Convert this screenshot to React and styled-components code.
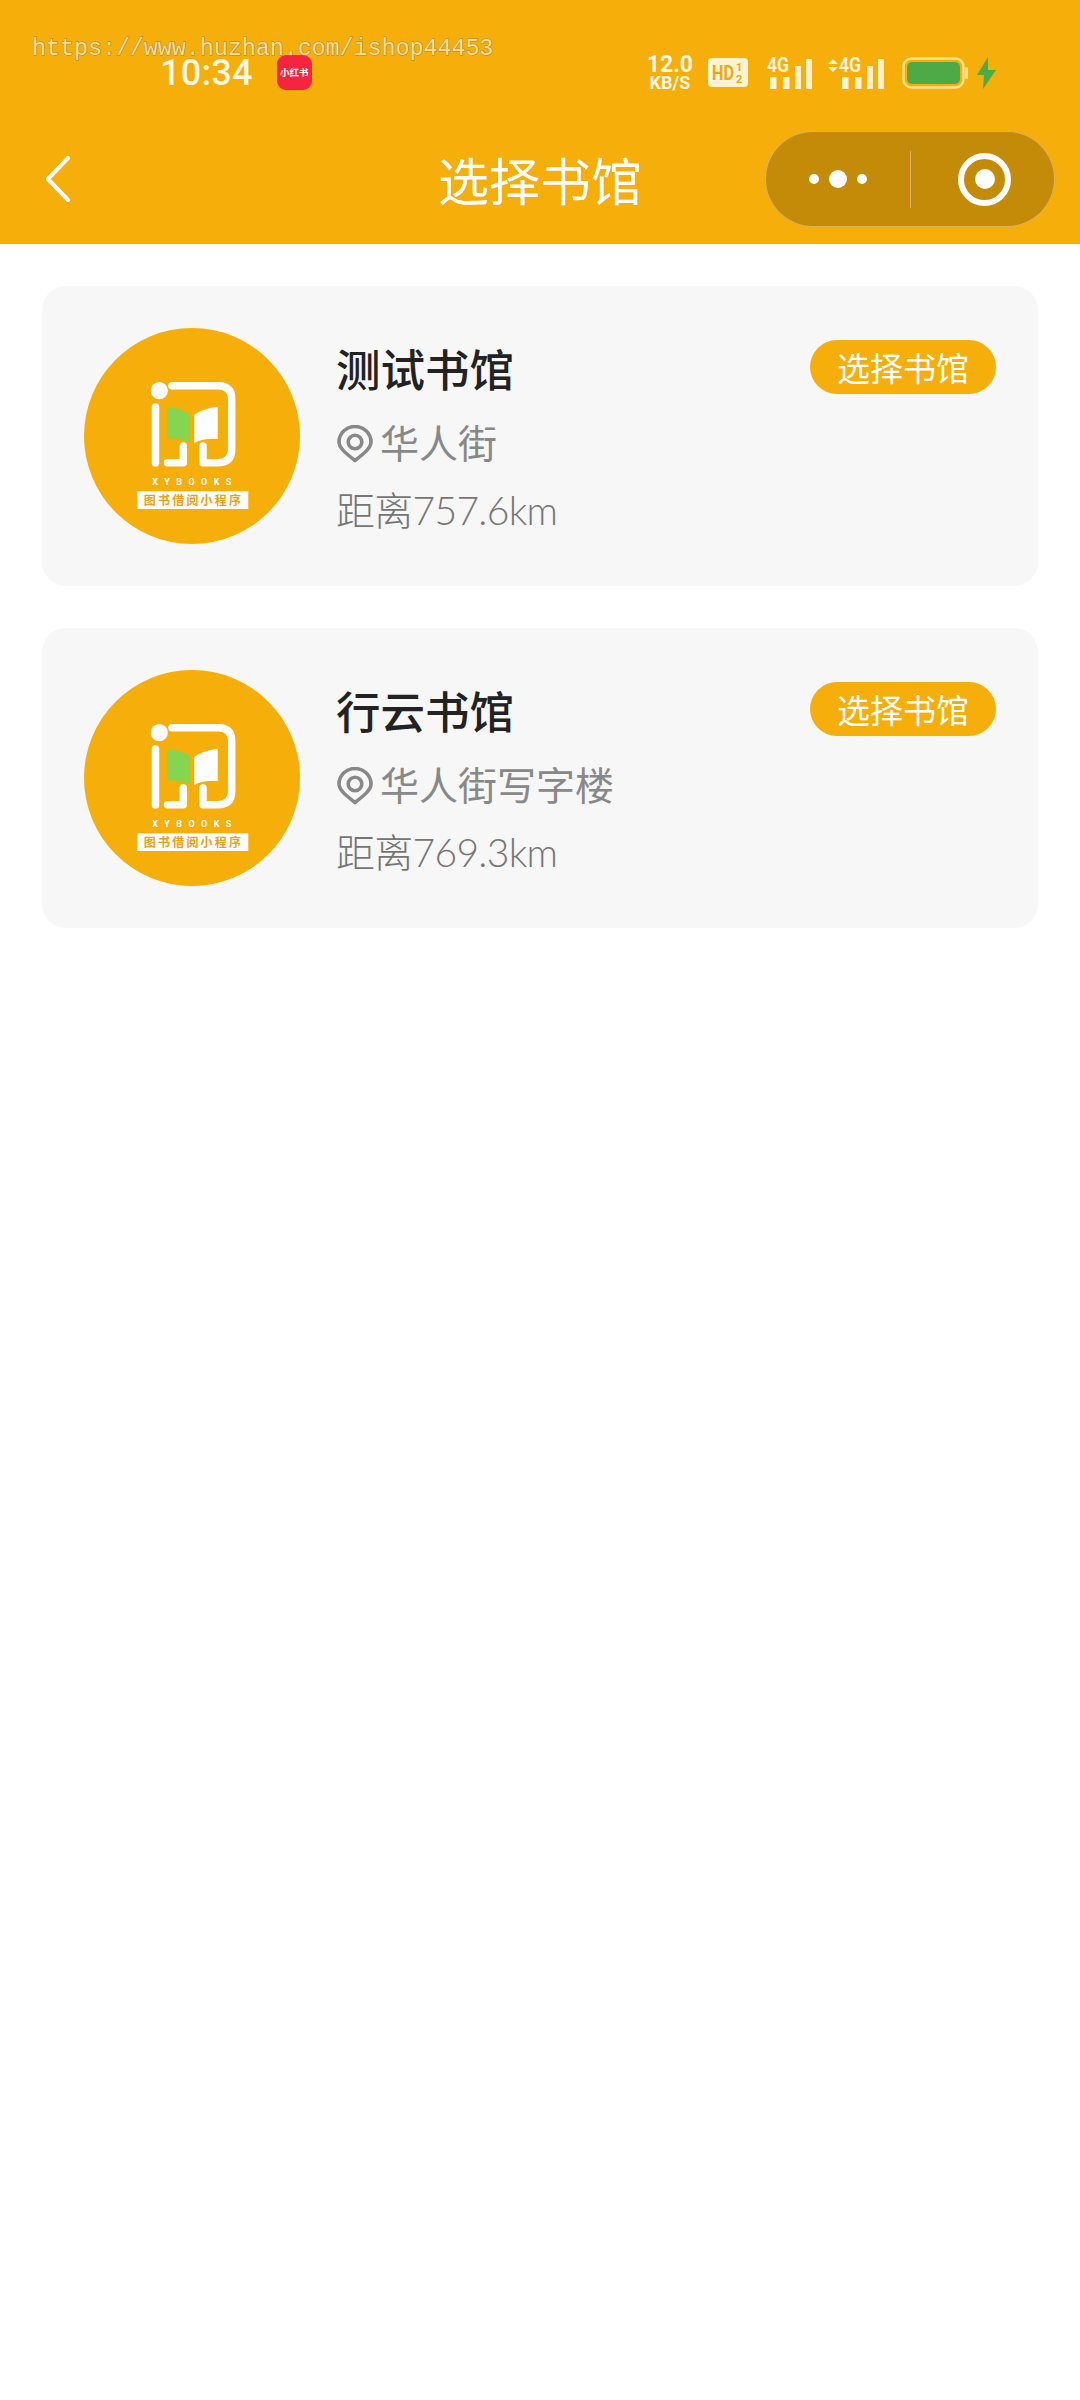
import React from "react";
import styled, { createGlobalStyle } from "styled-components";

const Global = createGlobalStyle`
  html, body { margin: 0; padding: 0; background: #fff; }
  body { font-family: "Noto Sans CJK SC", "Noto Sans", sans-serif; }
  * { box-sizing: border-box; }
`;

const Page = styled.div`
  width: 1080px;
  height: 2400px;
  background: #fff;
  overflow: hidden;
`;

const Header = styled.header`
  position: relative;
  height: 244px;
  padding-top: 53px;
  background: #f6ae0b;
`;

const Watermark = styled.div`
  position: absolute;
  left: 32px;
  top: 34px;
  font: 400 23.3px/30px "Liberation Mono", monospace;
  color: #f9dd93;
  -webkit-text-stroke: 1px #9a8650;
  paint-order: stroke fill;
  white-space: nowrap;
`;

const StatusBar = styled.div`
  display: flex;
  align-items: center;
  justify-content: space-between;
  height: 40px;
  padding: 0 84px 0 160px;
`;

const StatusLeft = styled.div`
  display: flex;
  align-items: center;
  gap: 24px;
`;

const Time = styled.span`
  font: 500 36px/40px Roboto, sans-serif;
  color: #fff8e0;
  letter-spacing: 0.3px;
`;

const AppBadge = styled.span`
  display: flex;
  align-items: center;
  justify-content: center;
  width: 35px;
  height: 35px;
  margin-top: -2px;
  border-radius: 9px;
  background: #f5243f;
  color: #fff;
  font-size: 9.5px;
  font-weight: 700;
  white-space: nowrap;
`;

const StatusRight = styled.div`
  display: flex;
  align-items: center;
  margin-top: -1px;
`;

const Speed = styled.div`
  display: flex;
  flex-direction: column;
  align-items: center;
  margin-right: 15px;
  color: #fff8e0;
  font-family: Roboto, sans-serif;
  font-weight: 700;
`;

const SpeedValue = styled.span`
  font-size: 23px;
  line-height: 19px;
`;

const SpeedUnit = styled.span`
  font-size: 18px;
  line-height: 17px;
`;

const StatusIcon = styled.svg`
  display: block;
  flex: none;
  overflow: visible;
  margin-left: ${(p) => p.$gap || 0}px;
`;

const IconLabel = styled.text`
  font-family: "Roboto", sans-serif;
  font-weight: 700;
  fill: ${(p) => p.$fill || "#fff3d0"};
`;

const NavBar = styled.nav`
  display: grid;
  grid-template-columns: 1fr auto 1fr;
  align-items: center;
  height: 96px;
  margin-top: 38px;
  padding: 0 25px;
`;

const BackButton = styled.svg`
  display: block;
  margin-left: 20px;
`;

const NavTitle = styled.h1`
  margin: 0;
  font-size: 51px;
  font-weight: 400;
  line-height: 96px;
  color: #fff;
`;

const Capsule = styled.div`
  justify-self: end;
  display: flex;
  align-items: center;
  width: 290px;
  height: 96px;
  border-radius: 48px;
  border: 1.5px solid rgba(255, 255, 255, 0.35);
  background: #c38b08;
`;

const CapsuleHalf = styled.div`
  flex: 1;
  display: flex;
  align-items: center;
  justify-content: center;
  gap: 10px;
  height: 57px;
  & + & { border-left: 1.5px solid rgba(255, 255, 255, 0.35); }
`;

const Dot = styled.span`
  width: ${(p) => p.$size}px;
  height: ${(p) => p.$size}px;
  border-radius: 50%;
  background: #fff;
`;

const Target = styled.span`
  display: flex;
  align-items: center;
  justify-content: center;
  width: 53px;
  height: 53px;
  margin-left: 5px;
  border: 6px solid #fff;
  border-radius: 50%;
  &::after {
    content: "";
    width: 20px;
    height: 20px;
    border-radius: 50%;
    background: #fff;
  }
`;

const List = styled.main`
  display: flex;
  flex-direction: column;
  gap: 42px;
  padding: 42px;
`;

const Card = styled.article`
  display: flex;
  gap: 36px;
  padding: 42px;
  border-radius: 24px;
  background: #f7f7f7;
`;

const Info = styled.div`
  flex: 1;
  display: flex;
  flex-direction: column;
  gap: 13px;
  padding-top: 12px;
`;

const TitleRow = styled.div`
  display: flex;
  align-items: flex-start;
  justify-content: space-between;
  height: 60px;
`;

const CardTitle = styled.h2`
  margin: -2px 0 0;
  font-size: 44.5px;
  font-weight: 500;
  line-height: 60px;
  color: #222;
`;

const SelectButton = styled.button`
  width: 186px;
  height: 54px;
  padding: 0;
  border: 0;
  border-radius: 27px;
  background: #f6ae0b;
  color: #fff;
  font-family: inherit;
  font-size: 33px;
  line-height: 54px;
`;

const Address = styled.div`
  display: flex;
  align-items: center;
  gap: 7px;
  height: 56px;
  font-size: 39px;
  color: #888;
`;

const PinIcon = styled.svg`
  display: block;
  flex: none;
  margin: 5px 0 0 1px;
`;

const Distance = styled.div`
  height: 56px;
  font-family: Lato, "Noto Sans CJK SC", sans-serif;
  font-size: 39px;
  font-weight: 300;
  letter-spacing: -0.7px;
  line-height: 56px;
  color: #757575;
`;

const Logo = () => (
  <svg width="216" height="216" viewBox="0 0 216 216" style={{ flex: "none" }}>
    <circle cx="108" cy="108" r="108" fill="#f6ae0b" />
    <circle cx="75.3" cy="62.7" r="8.6" fill="#fff" />
    <g fill="none" stroke="#fff" strokeWidth="7.5" strokeLinecap="round" strokeLinejoin="round">
      <path d="M71.5 79V135" />
      <path d="M88 57.7H134Q147.7 57.7 147.7 71V121Q147.7 134.7 134 134.7H119V118" />
      <path d="M83.5 134.7H99.3V118" />
    </g>
    <path d="M83.3 79.3Q97 80 106 86.7V114.3Q95 110 83.3 110.3Z" fill="#86d44f" />
    <path d="M110.3 86.7Q120 80 133.7 78.7V111Q120 110 110.3 115Z" fill="#fff" />
    <text x="111" y="157" textAnchor="middle" fontFamily="Roboto, sans-serif" fontWeight="700" fontSize="9" letterSpacing="6.4" fill="#fff">XYBOOKS</text>
    <rect x="53.3" y="163.3" width="111" height="17.7" fill="#fff" />
    <text x="109.5" y="176.5" textAnchor="middle" fontFamily="Noto Sans CJK SC, sans-serif" fontWeight="700" fontSize="12" letterSpacing="2.2" fill="#e9a11a">图书借阅小程序</text>
  </svg>
);

const Pin = () => (
  <PinIcon width="36" height="38" viewBox="0 0 36 38">
    <path d="M18 35.5C9 28.5 2 23 2 17A16 15.5 0 0 1 34 17C34 23 27 28.5 18 35.5Z" fill="none" stroke="#888" strokeWidth="3.6" strokeLinejoin="round" />
    <circle cx="18" cy="17" r="6.8" fill="none" stroke="#888" strokeWidth="3.6" />
  </PinIcon>
);

const Signal = ({ arrows }) => (
  <StatusIcon $gap={arrows ? 12 : 19} width={arrows ? 60 : 46} height="34" viewBox={`${arrows ? -14 : 0} 0 ${arrows ? 60 : 46} 34`}>
    {arrows && (
      <g fill="#fff3d0">
        <path d="M-11 8L-6 3L-1 8Z" />
        <path d="M-11 11L-6 16L-1 11Z" />
      </g>
    )}
    <IconLabel x="0" y="16" fontSize="20" textLength="22" lengthAdjust="spacingAndGlyphs">4G</IconLabel>
    <rect x="3" y="21" width="6.5" height="12" fill="#fff3d0" />
    <rect x="16" y="21" width="6.5" height="12" fill="#fff3d0" />
    <rect x="28" y="10" width="6" height="23" fill="#fff3d0" opacity="0.95" />
    <rect x="39" y="3" width="6" height="30" fill="#fff3d0" opacity="0.95" />
  </StatusIcon>
);

const libraries = [
  { name: "测试书馆", address: "华人街", distance: "距离757.6km" },
  { name: "行云书馆", address: "华人街写字楼", distance: "距离769.3km" },
];

export default function App() {
  return (
    <Page>
      <Global />
      <Header>
        <Watermark>https://www.huzhan.com/ishop44453</Watermark>
        <StatusBar>
          <StatusLeft>
            <Time>10:34</Time>
            <AppBadge>小红书</AppBadge>
          </StatusLeft>
          <StatusRight>
            <Speed>
              <SpeedValue>12.0</SpeedValue>
              <SpeedUnit>KB/S</SpeedUnit>
            </Speed>
            <StatusIcon width="40" height="29" viewBox="0 0 40 29">
              <rect width="40" height="29" rx="4" fill="#fff3d0" />
              <IconLabel x="4" y="22" fontSize="20" $fill="#e8a81c" textLength="22" lengthAdjust="spacingAndGlyphs">HD</IconLabel>
              <IconLabel x="28" y="13" fontSize="11" $fill="#e8a81c">1</IconLabel>
              <IconLabel x="28" y="25" fontSize="11" $fill="#e8a81c">2</IconLabel>
            </StatusIcon>
            <Signal />
            <Signal arrows />
            <StatusIcon $gap={17} width="66" height="32" viewBox="0 0 66 32">
              <rect x="1.5" y="1.5" width="60" height="29" rx="8" fill="none" stroke="#fbe08a" strokeWidth="2.5" />
              <rect x="5" y="5" width="53" height="22" rx="5" fill="#4eaa46" />
              <rect x="63" y="10" width="3" height="12" rx="1.5" fill="#fbe08a" />
            </StatusIcon>
            <StatusIcon $gap={9} width="19" height="32" viewBox="0 0 19 32">
              <path d="M11 0L0 18H7L6 32L19 13H11Z" fill="#4eaa46" />
            </StatusIcon>
          </StatusRight>
        </StatusBar>
        <NavBar>
          <BackButton width="26" height="46" viewBox="0 0 26 46">
            <path d="M23 2L3 23L23 44" fill="none" stroke="#fff" strokeWidth="4" strokeLinecap="round" strokeLinejoin="round" />
          </BackButton>
          <NavTitle>选择书馆</NavTitle>
          <Capsule>
            <CapsuleHalf>
              <Dot $size={10} />
              <Dot $size={18} />
              <Dot $size={10} />
            </CapsuleHalf>
            <CapsuleHalf>
              <Target />
            </CapsuleHalf>
          </Capsule>
        </NavBar>
      </Header>
      <List>
        {libraries.map((lib) => (
          <Card key={lib.name}>
            <Logo />
            <Info>
              <TitleRow>
                <CardTitle>{lib.name}</CardTitle>
                <SelectButton>选择书馆</SelectButton>
              </TitleRow>
              <Address>
                <Pin />
                {lib.address}
              </Address>
              <Distance>{lib.distance}</Distance>
            </Info>
          </Card>
        ))}
      </List>
    </Page>
  );
}
